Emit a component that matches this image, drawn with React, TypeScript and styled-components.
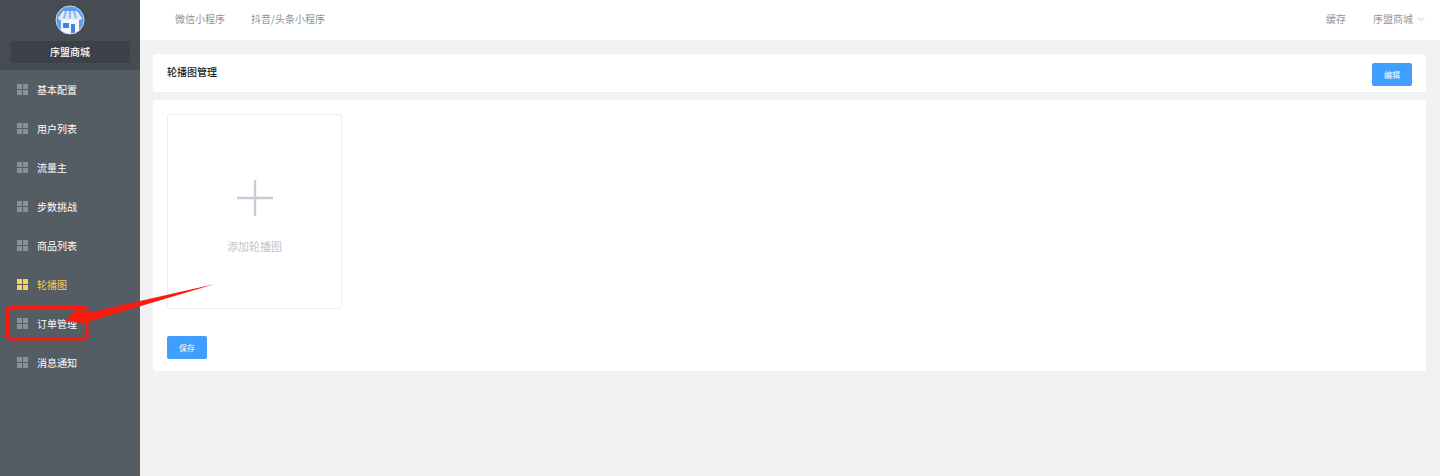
import React from "react";
import styled, { createGlobalStyle } from "styled-components";

const menuItems = [
  "基本配置",
  "用户列表",
  "流量主",
  "步数挑战",
  "商品列表",
  "轮播图",
  "订单管理",
  "消息通知",
];

const GlobalStyle = createGlobalStyle`
  html, body {
    margin: 0;
    padding: 0;
    height: 100%;
    background: #f2f2f2;
  }
  * {
    box-sizing: border-box;
  }
  #root {
    font-family: "Noto Sans CJK SC", "Liberation Sans", sans-serif;
  }
`;

const Layout = styled.div`
  position: relative;
  display: flex;
  width: 1440px;
  height: 476px;
  overflow: hidden;
`;

const Sidebar = styled.aside`
  width: 140px;
  flex-shrink: 0;
  background: #545c64;
`;

const Brand = styled.div`
  height: 70px;
  padding-top: 5px;
  display: flex;
  flex-direction: column;
  align-items: center;
  background: #474c52;
`;

const BrandName = styled.div`
  width: 119px;
  height: 22px;
  margin-top: 6px;
  border-radius: 2px;
  background: #3c4047;
  color: #fff;
  font-size: 10px;
  font-weight: 500;
  line-height: 21px;
  text-align: center;
`;

const MenuItem = styled.div<{ $active?: boolean }>`
  display: flex;
  align-items: center;
  gap: 9px;
  height: 39px;
  padding-left: 17px;
  color: ${({ $active }) => ($active ? "#ffd04b" : "#fff")};
  font-size: 10px;
`;

const GridIcon = styled.svg`
  width: 11px;
  height: 11px;
  margin-top: -1px;
  flex-shrink: 0;
`;

const Content = styled.div`
  flex: 1;
  display: flex;
  flex-direction: column;
`;

const Topbar = styled.header`
  height: 40px;
  display: flex;
  align-items: center;
  justify-content: space-between;
  padding: 0 15px 3px 35px;
  background: #fff;
`;

const TopGroup = styled.div<{ $gap: number }>`
  display: flex;
  align-items: center;
  gap: ${({ $gap }) => $gap}px;
`;

const TopLink = styled.span`
  display: inline-flex;
  align-items: center;
  gap: 4px;
  color: #909399;
  font-size: 10px;
`;

const Main = styled.main`
  padding: 14px 14px 0 13px;
`;

const HeaderCard = styled.div`
  height: 39px;
  display: flex;
  align-items: center;
  justify-content: space-between;
  padding: 3px 14px 0;
  border-bottom: 1px solid #ebeef5;
  border-radius: 3px 3px 0 0;
  background: #fff;
`;

const Title = styled.h2`
  margin: 0;
  padding-bottom: 7px;
  color: #1c1d1f;
  font-size: 10px;
  font-weight: 500;
`;

const Button = styled.button`
  width: 40px;
  height: 23px;
  padding: 0;
  border: none;
  border-radius: 2px;
  background: #409eff;
  color: #fff;
  font-family: inherit;
  font-size: 8px;
`;

const BodyCard = styled.div`
  margin-top: 7px;
  height: 271px;
  padding: 14px;
  border-radius: 0 0 3px 3px;
  background: #fff;
`;

const Upload = styled.div`
  width: 175px;
  height: 195px;
  display: flex;
  flex-direction: column;
  align-items: center;
  padding-top: 65px;
  border: 1px solid #ebeef5;
  border-radius: 3px;
`;

const PlusIcon = styled.svg`
  width: 36px;
  height: 36px;
`;

const UploadText = styled.div`
  margin-top: 22px;
  color: #c0c4cc;
  font-size: 11px;
`;

const Actions = styled.div`
  margin-top: 27px;
  line-height: 0;
`;

const Annotation = styled.svg`
  position: absolute;
  top: 0;
  left: 0;
  pointer-events: none;
`;

const Grid = ({ color }: { color: string }) => (
  <GridIcon viewBox="0 0 11 11">
    <rect x="0" y="0" width="5" height="5" fill={color} />
    <rect x="6" y="0" width="5" height="5" fill={color} />
    <rect x="0" y="6" width="5" height="5" fill={color} />
    <rect x="6" y="6" width="5" height="5" fill={color} />
  </GridIcon>
);

const Logo = () => (
  <svg width="30" height="30" viewBox="0 0 30 30">
    <defs>
      <clipPath id="logo-clip">
        <circle cx="15" cy="15" r="14" />
      </clipPath>
    </defs>
    <circle cx="15" cy="15" r="14" fill="#5a9df2" />
    <g clipPath="url(#logo-clip)">
      <rect x="6" y="14" width="18" height="16" fill="#f4f7fc" />
      <rect x="8" y="18" width="6" height="5" fill="#3f83e8" />
      <rect x="16" y="19" width="4" height="11" fill="#3f83e8" />
    </g>
    <path d="M8 6h14l5 7c-1 3-5 3-6 0-1 3-5 3-6 0-1 3-5 3-6 0-1 3-5 3-6 0z" fill="#dfe9f8" />
    <path d="M11 6l-2 7M15 6v7M19 6l2 7" stroke="#8db8f2" strokeWidth="2" fill="none" />
    <circle cx="15" cy="15" r="14" fill="none" stroke="#d5d9de" strokeWidth="1" />
  </svg>
);

export default function App() {
  return (
    <>
      <GlobalStyle />
      <Layout>
        <Sidebar>
          <Brand>
            <Logo />
            <BrandName>序盟商城</BrandName>
          </Brand>
          {menuItems.map((item) => {
            const active = item === "轮播图";
            return (
              <MenuItem key={item} $active={active}>
                <Grid color={active ? "#ffd04b" : "#8b8f96"} />
                {item}
              </MenuItem>
            );
          })}
        </Sidebar>
        <Content>
          <Topbar>
            <TopGroup $gap={26}>
              <TopLink>微信小程序</TopLink>
              <TopLink>抖音/头条小程序</TopLink>
            </TopGroup>
            <TopGroup $gap={27}>
              <TopLink>缓存</TopLink>
              <TopLink>
                序盟商城
                <svg width="8" height="8" viewBox="0 0 8 8">
                  <path d="M1 2.5l3 3 3-3" fill="none" stroke="#b4b8bf" strokeWidth="0.8" />
                </svg>
              </TopLink>
            </TopGroup>
          </Topbar>
          <Main>
            <HeaderCard>
              <Title>轮播图管理</Title>
              <Button>编辑</Button>
            </HeaderCard>
            <BodyCard>
              <Upload>
                <PlusIcon viewBox="0 0 36 36">
                  <path d="M18 0v36M0 18h36" stroke="#c5ccd5" strokeWidth="2.4" fill="none" />
                </PlusIcon>
                <UploadText>添加轮播图</UploadText>
              </Upload>
              <Actions>
                <Button>保存</Button>
              </Actions>
            </BodyCard>
          </Main>
        </Content>
        <Annotation width="1440" height="476" viewBox="0 0 1440 476">
          <rect x="7.5" y="307.5" width="79.5" height="31.5" rx="3" fill="none" stroke="#fb1a0e" strokeWidth="3" />
          <path d="M215 284 L87 313 L77 308 L65 321 L83 323 L87 322 Z" fill="#fb1a0e" />
        </Annotation>
      </Layout>
    </>
  );
}
